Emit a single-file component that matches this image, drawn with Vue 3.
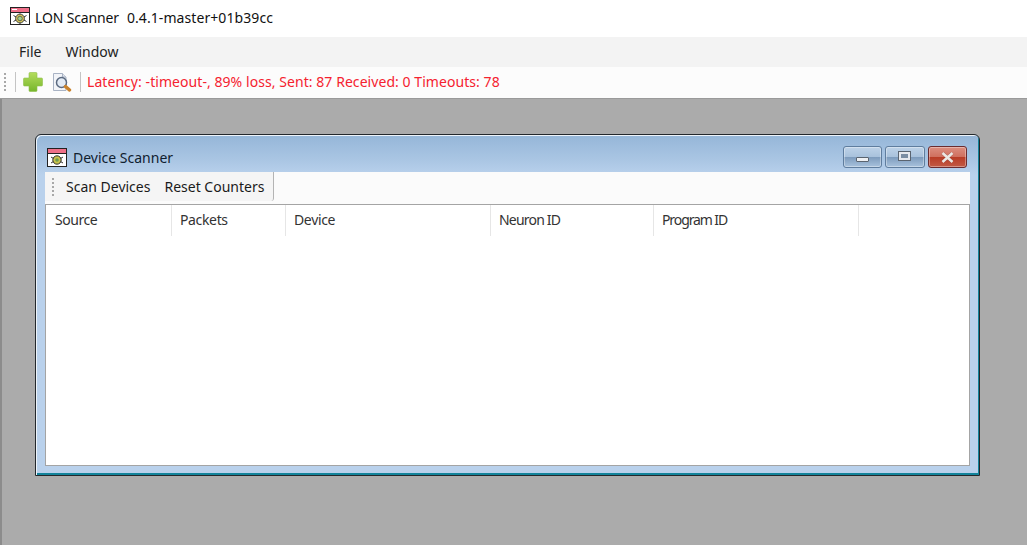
<script setup>
const columns = [
  { label: 'Source', width: 126, tracking: -0.45 },
  { label: 'Packets', width: 114, tracking: -0.35 },
  { label: 'Device', width: 205, tracking: -0.35 },
  { label: 'Neuron ID', width: 163, tracking: -0.8 },
  { label: 'Program ID', width: 205, tracking: -1.1 },
]
</script>

<template>
  <div class="app">
    <header class="titlebar">
      <svg class="appicon" width="20" height="18" viewBox="0 0 20 18">
        <rect x="0.5" y="0.5" width="19" height="17" fill="#fff" stroke="#222" />
        <rect x="1" y="1" width="18" height="4" fill="#f0708a" />
        <rect x="2" y="2" width="5" height="1" fill="#fff" />
        <line x1="1" y1="5.5" x2="19" y2="5.5" stroke="#222" />
        <circle cx="10" cy="11.500" r="4.400" fill="#d8c75a" stroke="#444" />
        <circle cx="10" cy="11.500" r="2.300" fill="#9fd08a" stroke="#444" stroke-width="0.7" />
        <path d="M3.500 8.500l2.500 1.500M16.500 8.500L14 10M3.500 14.500l2.500-1.500M16.500 14.500L14 13M10 6.500v.5M10 16v1" stroke="#333" />
      </svg>
      <span class="appname">LON Scanner</span>
      <span class="version">0.4.1-master+01b39cc</span>
    </header>
    <nav class="menubar">
      <span>File</span>
      <span>Window</span>
    </nav>
    <div class="toolbar">
      <i class="grip"></i>
      <i class="sep"></i>
      <svg class="tool plus" width="22" height="22" viewBox="0 0 22 22">
        <defs>
          <linearGradient id="plusfill" x1="0" y1="0" x2="0" y2="1">
            <stop offset="0" stop-color="#b4dc5c" />
            <stop offset="1" stop-color="#76b62c" />
          </linearGradient>
        </defs>
        <path d="M8 1.500h6a1 1 0 0 1 1 1V7h4.500a1 1 0 0 1 1 1v6a1 1 0 0 1-1 1H15v4.500a1 1 0 0 1-1 1H8a1 1 0 0 1-1-1V15H2.500a1 1 0 0 1-1-1V8a1 1 0 0 1 1-1H7V2.500a1 1 0 0 1 1-1z" fill="url(#plusfill)" stroke="#8ebf4a" stroke-width="0.6" />
      </svg>
      <svg class="tool lens" width="21" height="19" viewBox="0 0 21 19">
        <path d="M1.500 0.500h9l3.500 3.500v13.500h-12.500z" fill="#f2f4f8" stroke="#a9b3c4" />
        <path d="M10.500 0.500v3.500h3.500" fill="#dfe4ec" stroke="#a9b3c4" />
        <circle cx="9.500" cy="9.500" r="5" fill="#e3ebf5" stroke="#5b6a80" stroke-width="1.500" />
        <path d="M13.500 13.500l4 3.500" stroke="#c9822c" stroke-width="3.400" stroke-linecap="round" />
      </svg>
      <i class="sep after"></i>
      <span class="status">Latency: -timeout-, 89% loss, Sent: 87 Received: 0 Timeouts: 78</span>
    </div>
    <main class="mdi">
      <section class="window">
        <div class="caption">
          <svg class="winicon" width="20" height="19" viewBox="0 0 20 19">
            <rect x="0.500" y="0.500" width="19" height="18" fill="#fff" stroke="#222" />
            <rect x="1" y="1" width="18" height="4" fill="#ee7088" />
            <line x1="1" y1="5.500" x2="19" y2="5.500" stroke="#222" />
            <circle cx="10" cy="12" r="4.200" fill="#c9c34c" stroke="#333" />
            <circle cx="10" cy="12" r="1.800" fill="#6f9c50" />
            <path d="M4 9l2.500 1.500M16 9l-2.500 1.500M4 15l2.500-1.500M16 15l-2.500-1.500" stroke="#333" />
          </svg>
          <span class="wintitle">Device Scanner</span>
          <div class="winbtns">
            <button class="wb">
              <i class="min"></i>
            </button>
            <button class="wb">
              <i class="max"></i>
            </button>
            <button class="wb close">
              <svg width="15" height="11" viewBox="0 0 15 11">
                <path d="M2.500 1l10 9M12.500 1l-10 9" stroke="#5a2a28" stroke-width="3.400" opacity="0.35" />
                <path d="M2.500 1l10 9M12.500 1l-10 9" stroke="#ece8e4" stroke-width="2.600" />
              </svg>
            </button>
          </div>
        </div>
        <div class="wintoolbar">
          <div class="wintools">
            <i class="grip small"></i>
            <span>Scan Devices</span>
            <span>Reset Counters</span>
          </div>
        </div>
        <div class="table">
          <div class="thead">
            <div
              v-for="c in columns"
              :key="c.label"
              class="th"
              :style="{ width: c.width + 'px', letterSpacing: c.tracking + 'px' }"
            >{{ c.label }}</div>
          </div>
        </div>
      </section>
    </main>
  </div>
</template>

<style scoped>
.app {
  width: 1027px;
  height: 545px;
  display: flex;
  flex-direction: column;
  overflow: hidden;
  background: #fff;
  font-family: "Noto Sans", "Open Sans", sans-serif;
  font-size: 14px;
  color: #1a1a1a;
}
.titlebar {
  height: 37px;
  flex: none;
  display: flex;
  align-items: center;
  padding: 0 0 2px 10px;
  box-sizing: border-box;
  color: #111;
}
.appicon { margin: -4px 5px 0 0; }
.appname { letter-spacing: -0.15px; margin-right: 8px; }
.version { letter-spacing: 0.08px; }
.menubar {
  height: 30px;
  flex: none;
  display: flex;
  align-items: center;
  gap: 24px;
  padding: 0 0 1px 19px;
  box-sizing: border-box;
  background: #f3f3f3;
  color: #222;
}
.toolbar {
  height: 32px;
  flex: none;
  display: flex;
  align-items: center;
  box-sizing: border-box;
  background: #fcfcfc;
  border-bottom: 1px solid #9a9a9a;
  padding: 0 0 2px 4px;
}
.grip {
  width: 2px;
  height: 18px;
  background: repeating-linear-gradient(#a8a8a8 0 2px, transparent 2px 4px);
}
.sep {
  width: 1px;
  height: 20px;
  background: #c4c4c4;
  margin-left: 9px;
}
.sep.after { margin-left: 7px; }
.tool.plus { margin-left: 6px; }
.tool.lens { margin: 1px 0 0 8px; }
.status {
  margin-left: 6px;
  color: #f5222f;
  letter-spacing: 0.06px;
}
.mdi {
  flex: 1;
  box-sizing: border-box;
  background: #ababab;
  border-left: 2px solid #8c8c8c;
  padding: 35px 0 0 33px;
}
.window {
  width: 945px;
  height: 342px;
  box-sizing: border-box;
  border: 1px solid #23282c;
  border-radius: 6px 6px 0 0;
  background: linear-gradient(#95b6d8 0, #a9c5e3 24px, #b9d1ec 40px);
  box-shadow:
    inset 1px 1px 0 #eef4fa,
    inset -1px -2px 0 #12839a;
  display: flex;
  flex-direction: column;
  padding: 0 9px 9px 9px;
}
.caption {
  height: 37px;
  flex: none;
  display: flex;
  align-items: center;
  gap: 6px;
  padding: 7px 0 0 2px;
  box-sizing: border-box;
}
.wintitle {
  color: #10202f;
}
.winbtns {
  margin-left: auto;
  display: flex;
  gap: 3px;
  margin-right: 3px;
}
.wb {
  width: 39.5px;
  height: 22px;
  padding: 0;
  display: flex;
  align-items: center;
  justify-content: center;
  box-sizing: border-box;
  border: 1px solid #5f7d9e;
  border-radius: 3px;
  background: linear-gradient(#bdd2e8 0, #a9c2dc 48%, #7e9cbd 52%, #a8c2dd 100%);
  box-shadow: inset 0 0 0 1px rgba(255, 255, 255, 0.35);
}
.wb.close {
  border-color: #6b2c30;
  background: linear-gradient(#dc8e80 0, #d0705f 48%, #b93c26 52%, #c25a45 100%);
}
.min {
  width: 13px;
  height: 5px;
  margin-top: 5px;
  box-sizing: border-box;
  border: 1px solid #5a6470;
  background: #eef0f3;
  border-radius: 1px;
}
.max {
  width: 11px;
  height: 8px;
  margin-top: -3px;
  box-sizing: border-box;
  border: 2px solid #e6e9ee;
  outline: 1px solid #5a6470;
  background: #7b8ea3;
}
.wintoolbar {
  height: 32px;
  flex: none;
  background: #fbfbfb;
  box-sizing: border-box;
}
.wintools {
  height: 29px;
  width: 229px;
  display: flex;
  align-items: center;
  gap: 14px;
  box-sizing: border-box;
  padding-left: 7px;
  background: #f5f5f5;
  border-right: 1px solid #b4b4b4;
  border-radius: 0 0 3px 0;
  color: #1b1b1b;
}
.grip.small { margin-right: -2px; }
.table {
  flex: 1;
  background: #fff;
  border: 1px solid #a4a4a4;
  box-sizing: border-box;
}
.thead {
  display: flex;
  height: 31px;
}
.th {
  box-sizing: border-box;
  flex: none;
  padding: 5px 0 0 8px;
  border-right: 1px solid #e6e6e6;
  color: #333;
}
.th:first-child { padding-left: 9px; }
</style>
